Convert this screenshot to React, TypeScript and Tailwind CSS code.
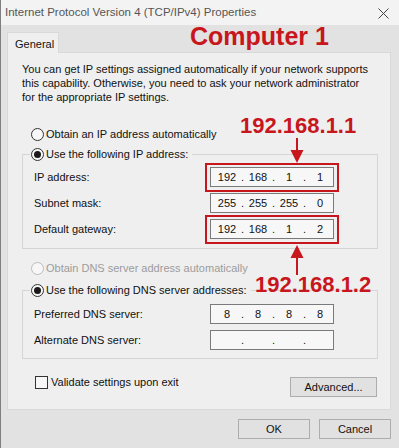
import React from 'react';

const RED = 'text-[#c8161d]';

const Radio: React.FC<{ checked?: boolean; disabled?: boolean }> = ({ checked, disabled }) => (
  <span
    className={`w-[13px] h-[13px] rounded-full border flex items-center justify-center shrink-0 bg-[#f7f7f7] ${
      disabled ? 'border-[#bcbcbc]' : 'border-[#333333]'
    }`}
  >
    {checked && <span className="w-[7px] h-[7px] rounded-full bg-[#1a1a1a]" />}
  </span>
);

interface IpBoxProps {
  parts: string[];
  highlight?: boolean;
}

const IpBox: React.FC<IpBoxProps> = ({ parts, highlight }) => (
  <div className="relative w-[124px] h-[20px] border border-[#7a7a7a] bg-[#f7f7f7] flex items-center pl-[4px] text-[#111]">
    {parts.map((p, i) => (
      <React.Fragment key={i}>
        <span className="w-[24px] text-center">{p}</span>
        {i < 3 && <span className="w-[7px] text-center">.</span>}
      </React.Fragment>
    ))}
    {highlight && (
      <span className="absolute -left-[6px] -right-[6px] -top-[5px] -bottom-[6px] border-2 border-[#c8161d]" />
    )}
  </div>
);

const Row: React.FC<{ label: string; children: React.ReactNode }> = ({ label, children }) => (
  <div className="flex items-center h-[20px]">
    <span className="w-[180px] pl-[4px]">{label}</span>
    {children}
  </div>
);

const App: React.FC = () => {
  return (
    <div className="relative w-[399px] h-[448px] overflow-hidden bg-[#e2e2e2] border-l border-[#7f7f7f] text-[11px] text-[#111] font-['Liberation_Sans',Arial,sans-serif]">
      {/* title bar */}
      <div className="h-[25px] bg-[#f3f3f3] flex items-center justify-between pl-[4px] pr-[10px]">
        <span className="text-[11.5px] text-[#555]">Internet Protocol Version 4 (TCP/IPv4) Properties</span>
        <svg width="11" height="11" viewBox="0 0 11 11" className="mt-[1px]">
          <path d="M0.5 0.5 L10.5 10.5 M10.5 0.5 L0.5 10.5" stroke="#444" strokeWidth="1" />
        </svg>
      </div>

      {/* tab */}
      <div className="ml-[6px] mt-[7px] relative z-10 -mb-px w-[52px] h-[21px] border-l border-t border-r border-[#d9d9d9] bg-[#efefef] pl-[7px] pt-[3px]">
        General
      </div>

      {/* panel */}
      <div className="ml-[6px] w-[384px] h-[358px] border border-[#d9d9d9] bg-[#efefef] pl-[14px] pr-[12px] pt-[9px]">
        <p className="leading-[14px] whitespace-nowrap">
          You can get IP settings assigned automatically if your network supports
          <br />
          this capability. Otherwise, you need to ask your network administrator
          <br />
          for the appropriate IP settings.
        </p>

        <div className="mt-[20px] h-[20px] ml-[9px] flex items-center gap-[2px]">
          <Radio />
          <span>Obtain an IP address automatically</span>
        </div>

        <fieldset className="mt-[2px] border border-[#d5d5d5] pl-[7px] pb-[9px]">
          <legend className="px-[1px] pr-[4px] h-[16px]">
            <span className="flex items-center gap-[2px] h-[16px]">
              <Radio checked />
              <span>Use the following IP address:</span>
            </span>
          </legend>
          <div className="pt-[5px] flex flex-col gap-[6px]">
            <Row label="IP address:">
              <IpBox parts={['192', '168', '1', '1']} highlight />
            </Row>
            <Row label="Subnet mask:">
              <IpBox parts={['255', '255', '255', '0']} />
            </Row>
            <Row label="Default gateway:">
              <IpBox parts={['192', '168', '1', '2']} highlight />
            </Row>
          </div>
        </fieldset>

        <div className="mt-[9px] h-[20px] ml-[9px] flex items-center gap-[2px] text-[#9c9c9c]">
          <Radio disabled />
          <span>Obtain DNS server address automatically</span>
        </div>

        <fieldset className="mt-[4px] border border-[#d5d5d5] pl-[7px] pb-[8px]">
          <legend className="px-[1px] pr-[4px] h-[16px]">
            <span className="flex items-center gap-[2px] h-[16px]">
              <Radio checked />
              <span>Use the following DNS server addresses:</span>
            </span>
          </legend>
          <div className="pt-[6px] flex flex-col gap-[6px]">
            <Row label="Preferred DNS server:">
              <IpBox parts={['8', '8', '8', '8']} />
            </Row>
            <Row label="Alternate DNS server:">
              <IpBox parts={['', '', '', '']} />
            </Row>
          </div>
        </fieldset>

        <div className="mt-[17px] flex items-start justify-between pr-[1px]">
          <label className="ml-[13px] flex items-center gap-[3px] h-[13px]">
            <span className="w-[13px] h-[13px] border border-[#333] bg-[#f7f7f7]" />
            <span>Validate settings upon exit</span>
          </label>
          <button className="mt-[1px] w-[87px] h-[20px] border border-[#adadad] bg-[#e1e1e1]">Advanced...</button>
        </div>
      </div>

      {/* dialog buttons */}
      <div className="mt-[9px] flex justify-end gap-[9px] pr-[8px]">
        <button className="w-[72px] h-[20px] border border-[#adadad] bg-[#e1e1e1]">OK</button>
        <button className="w-[72px] h-[20px] border border-[#adadad] bg-[#e1e1e1]">Cancel</button>
      </div>

      {/* annotations */}
      <span className={`absolute left-[189px] top-[24px] text-[25px] leading-[25px] font-bold ${RED}`}>Computer 1</span>
      <span className={`absolute left-[239px] top-[115px] text-[22px] leading-[22px] font-bold ${RED}`}>192.168.1.1</span>
      <span className={`absolute left-[254px] top-[274px] text-[22px] leading-[22px] font-bold ${RED}`}>192.168.1.2</span>

      <svg className="absolute left-[288px] top-[138px]" width="16" height="26" viewBox="0 0 16 26">
        <path d="M8 0 V14" stroke="#c8161d" strokeWidth="2" />
        <path d="M1.5 12 H14.5 L8 25 Z" fill="#c8161d" />
      </svg>
      <svg className="absolute left-[288px] top-[244px]" width="16" height="31" viewBox="0 0 16 31">
        <path d="M8 12 V31" stroke="#c8161d" strokeWidth="2" />
        <path d="M8 1 L14.5 14 H1.5 Z" fill="#c8161d" />
      </svg>
    </div>
  );
};

export default App;
